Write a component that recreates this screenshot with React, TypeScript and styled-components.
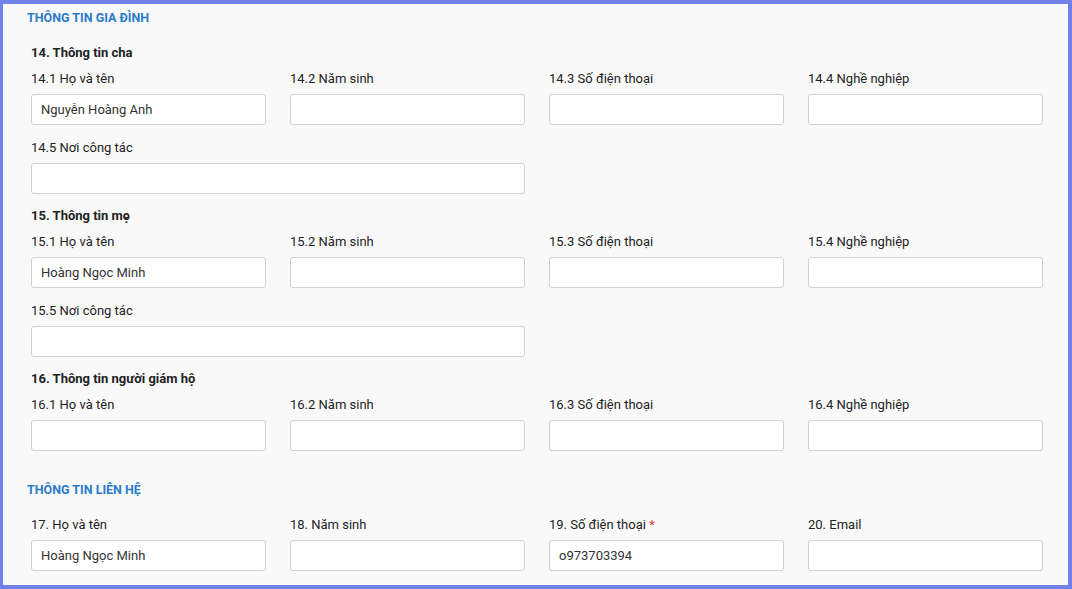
import React from "react";
import styled, { createGlobalStyle } from "styled-components";

const GlobalStyle = createGlobalStyle`
  html, body {
    margin: 0;
    padding: 0;
    background: #7081ea;
    overflow: hidden;
  }
  * {
    box-sizing: border-box;
  }
`;

type Field = { label: string; value?: string; wide?: boolean; required?: boolean };
type Group = { heading?: string; rows: Field[][] };

const family: Group[] = [
  {
    heading: "14. Thông tin cha",
    rows: [
      [
        { label: "14.1 Họ và tên", value: "Nguyễn Hoàng Anh" },
        { label: "14.2 Năm sinh" },
        { label: "14.3 Số điện thoại" },
        { label: "14.4 Nghề nghiệp" },
      ],
      [{ label: "14.5 Nơi công tác", wide: true }],
    ],
  },
  {
    heading: "15. Thông tin mẹ",
    rows: [
      [
        { label: "15.1 Họ và tên", value: "Hoàng Ngọc Minh" },
        { label: "15.2 Năm sinh" },
        { label: "15.3 Số điện thoại" },
        { label: "15.4 Nghề nghiệp" },
      ],
      [{ label: "15.5 Nơi công tác", wide: true }],
    ],
  },
  {
    heading: "16. Thông tin người giám hộ",
    rows: [
      [
        { label: "16.1 Họ và tên" },
        { label: "16.2 Năm sinh" },
        { label: "16.3 Số điện thoại" },
        { label: "16.4 Nghề nghiệp" },
      ],
    ],
  },
];

const contact: Group[] = [
  {
    rows: [
      [
        { label: "17. Họ và tên", value: "Hoàng Ngọc Minh" },
        { label: "18. Năm sinh" },
        { label: "19. Số điện thoại", value: "o973703394", required: true },
        { label: "20. Email" },
      ],
    ],
  },
];

function FormGroups({ groups }: { groups: Group[] }) {
  return (
    <Fields>
      {groups.map((g, gi) => (
        <GroupBox key={gi}>
          {g.heading && <GroupHeading>{g.heading}</GroupHeading>}
          {g.rows.map((row, ri) => (
            <Row key={ri}>
              {row.map((f) => (
                <FieldBox key={f.label} $wide={f.wide}>
                  <Label>
                    {f.label}
                    {f.required && <Star> *</Star>}
                  </Label>
                  <Input type="text" defaultValue={f.value ?? ""} />
                </FieldBox>
              ))}
            </Row>
          ))}
        </GroupBox>
      ))}
    </Fields>
  );
}

export default function App() {
  return (
    <>
      <GlobalStyle />
      <Frame>
        <Section>
          <SectionTitle>Thông tin gia đình</SectionTitle>
          <FormGroups groups={family} />
        </Section>
        <Section $spaced>
          <SectionTitle>Thông tin liên hệ</SectionTitle>
          <FormGroups groups={contact} />
        </Section>
      </Frame>
    </>
  );
}

const Frame = styled.div`
  margin: 4px 4px 4px 3px;
  height: 581px;
  background: #f9f9fa;
  overflow: hidden;
  font-family: Roboto, "Liberation Sans", Arial, sans-serif;
  color: #222;
  padding-top: 6px;
`;

const Section = styled.section<{ $spaced?: boolean }>`
  margin-top: ${(p) => (p.$spaced ? "31px" : "0")};
`;

const SectionTitle = styled.h2`
  margin: 0 0 19px 24px;
  font-size: 12.5px;
  line-height: 16px;
  font-weight: 700;
  text-transform: uppercase;
  color: #2b7bca;
`;

const Fields = styled.div`
  display: flex;
  flex-direction: column;
  gap: 14px;
  padding: 0 25px 0 28px;
`;

const GroupBox = styled.div`
  display: flex;
  flex-direction: column;
  gap: 15px;
`;

const GroupHeading = styled.h3`
  margin: 0 0 -5px 0;
  font-size: 13px;
  line-height: 16px;
  font-weight: 700;
  color: #222;
`;

const Row = styled.div`
  display: grid;
  grid-template-columns: repeat(4, 235px);
  column-gap: 24px;
`;

const FieldBox = styled.div<{ $wide?: boolean }>`
  display: flex;
  flex-direction: column;
  gap: 7px;
  grid-column: ${(p) => (p.$wide ? "span 2" : "span 1")};
`;

const Label = styled.label`
  font-size: 13px;
  line-height: 16px;
  color: #222;
`;

const Star = styled.span`
  color: #e53935;
`;

const Input = styled.input`
  height: 31px;
  width: 100%;
  padding: 0 9px;
  border: 1px solid #cdd1d8;
  border-radius: 3px;
  background: #fff;
  font-family: Roboto, "Liberation Sans", Arial, sans-serif;
  font-size: 13px;
  color: #333;
  outline: none;
`;
